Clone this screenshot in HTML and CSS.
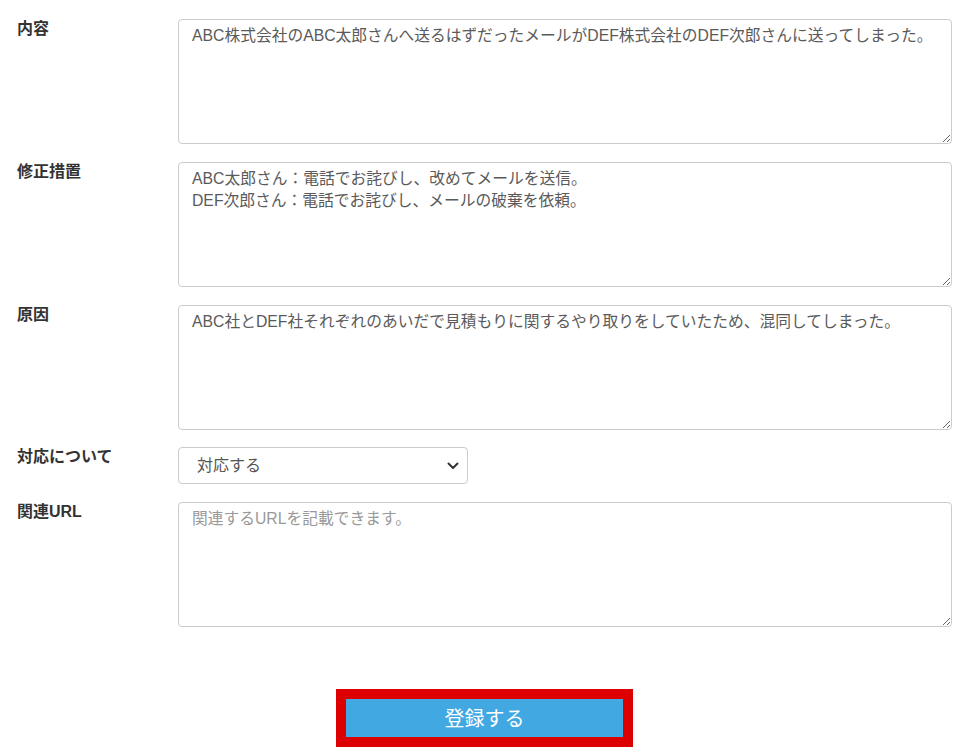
FILE: index.html
```html
<!DOCTYPE html>
<html lang="ja">
<head>
    <meta charset="UTF-8">
    <meta name="viewport" content="width=device-width, initial-scale=1.0">
    <title>報告フォーム</title>
    <link rel="stylesheet" href="styles.css">
</head>
<body>
    <form class="report-form">
        <div class="form-row">
            <label class="form-label" for="content">内容</label>
            <textarea id="content" class="form-text">ABC株式会社のABC太郎さんへ送るはずだったメールがDEF株式会社のDEF次郎さんに送ってしまった。</textarea>
        </div>
        <div class="form-row">
            <label class="form-label" for="fix">修正措置</label>
            <textarea id="fix" class="form-text">ABC太郎さん：電話でお詫びし、改めてメールを送信。
DEF次郎さん：電話でお詫びし、メールの破棄を依頼。</textarea>
        </div>
        <div class="form-row">
            <label class="form-label" for="cause">原因</label>
            <textarea id="cause" class="form-text">ABC社とDEF社それぞれのあいだで見積もりに関するやり取りをしていたため、混同してしまった。</textarea>
        </div>
        <div class="form-row">
            <label class="form-label" for="response">対応について</label>
            <div class="select-wrap">
                <select id="response" class="form-select">
                    <option>対応する</option>
                    <option>対応しない</option>
                </select>
                <svg class="select-arrow" width="12" height="8" viewBox="0 0 12 8">
                    <path d="M1.5 1.5 L6 6 L10.5 1.5" fill="none" stroke="#333" stroke-width="2" stroke-linecap="round" stroke-linejoin="round"/>
                </svg>
            </div>
        </div>
        <div class="form-row">
            <label class="form-label" for="url">関連URL</label>
            <textarea id="url" class="form-text" placeholder="関連するURLを記載できます。"></textarea>
        </div>
        <div class="form-actions">
            <button type="button" class="submit-button">登録する</button>
        </div>
    </form>
</body>
</html>
```

FILE: styles.css
```css
body {
    margin: 0;
    padding: 0;
    background-color: #fff;
    font-family: "Liberation Sans", "Noto Sans CJK JP", sans-serif;
    color: #333;
}

.report-form {
    padding: 19px 17px 0 17px;
    display: flex;
    flex-direction: column;
    gap: 17.8px;
}

.form-row {
    display: grid;
    grid-template-columns: 161px 774px;
    align-items: start;
}

.form-label {
    font-size: 16px;
    font-weight: bold;
    color: #333;
    line-height: 18px;
    padding-top: 1px;
}

.form-text {
    display: block;
    box-sizing: border-box;
    width: 774px;
    height: 125px;
    padding: 5px 6px 5px 13px;
    border: 1px solid #ccc;
    border-radius: 4px;
    font-family: inherit;
    font-size: 15.75px;
    line-height: 22px;
    color: #5a5a5a;
    outline: none;
    margin: 0;
}

.form-text::placeholder {
    color: #999;
}

.select-wrap {
    position: relative;
    width: 290px;
}

.form-select {
    display: block;
    box-sizing: border-box;
    width: 290px;
    height: 37px;
    padding: 0 18px;
    border: 1px solid #ccc;
    border-radius: 4px;
    background-color: #fff;
    font-family: inherit;
    font-size: 16px;
    color: #555;
    appearance: none;
    -webkit-appearance: none;
    outline: none;
    margin: 0;
}

.select-arrow {
    position: absolute;
    right: 9px;
    top: 15px;
    pointer-events: none;
}

.form-actions {
    display: flex;
    justify-content: center;
    margin-top: 44px;
}

.submit-button {
    box-sizing: border-box;
    width: 297px;
    height: 58px;
    border: 10px solid #dd0000;
    border-radius: 0;
    background-color: #42a8e2;
    color: #fff;
    font-family: inherit;
    font-size: 20px;
    cursor: pointer;
    padding: 0;
}
```
